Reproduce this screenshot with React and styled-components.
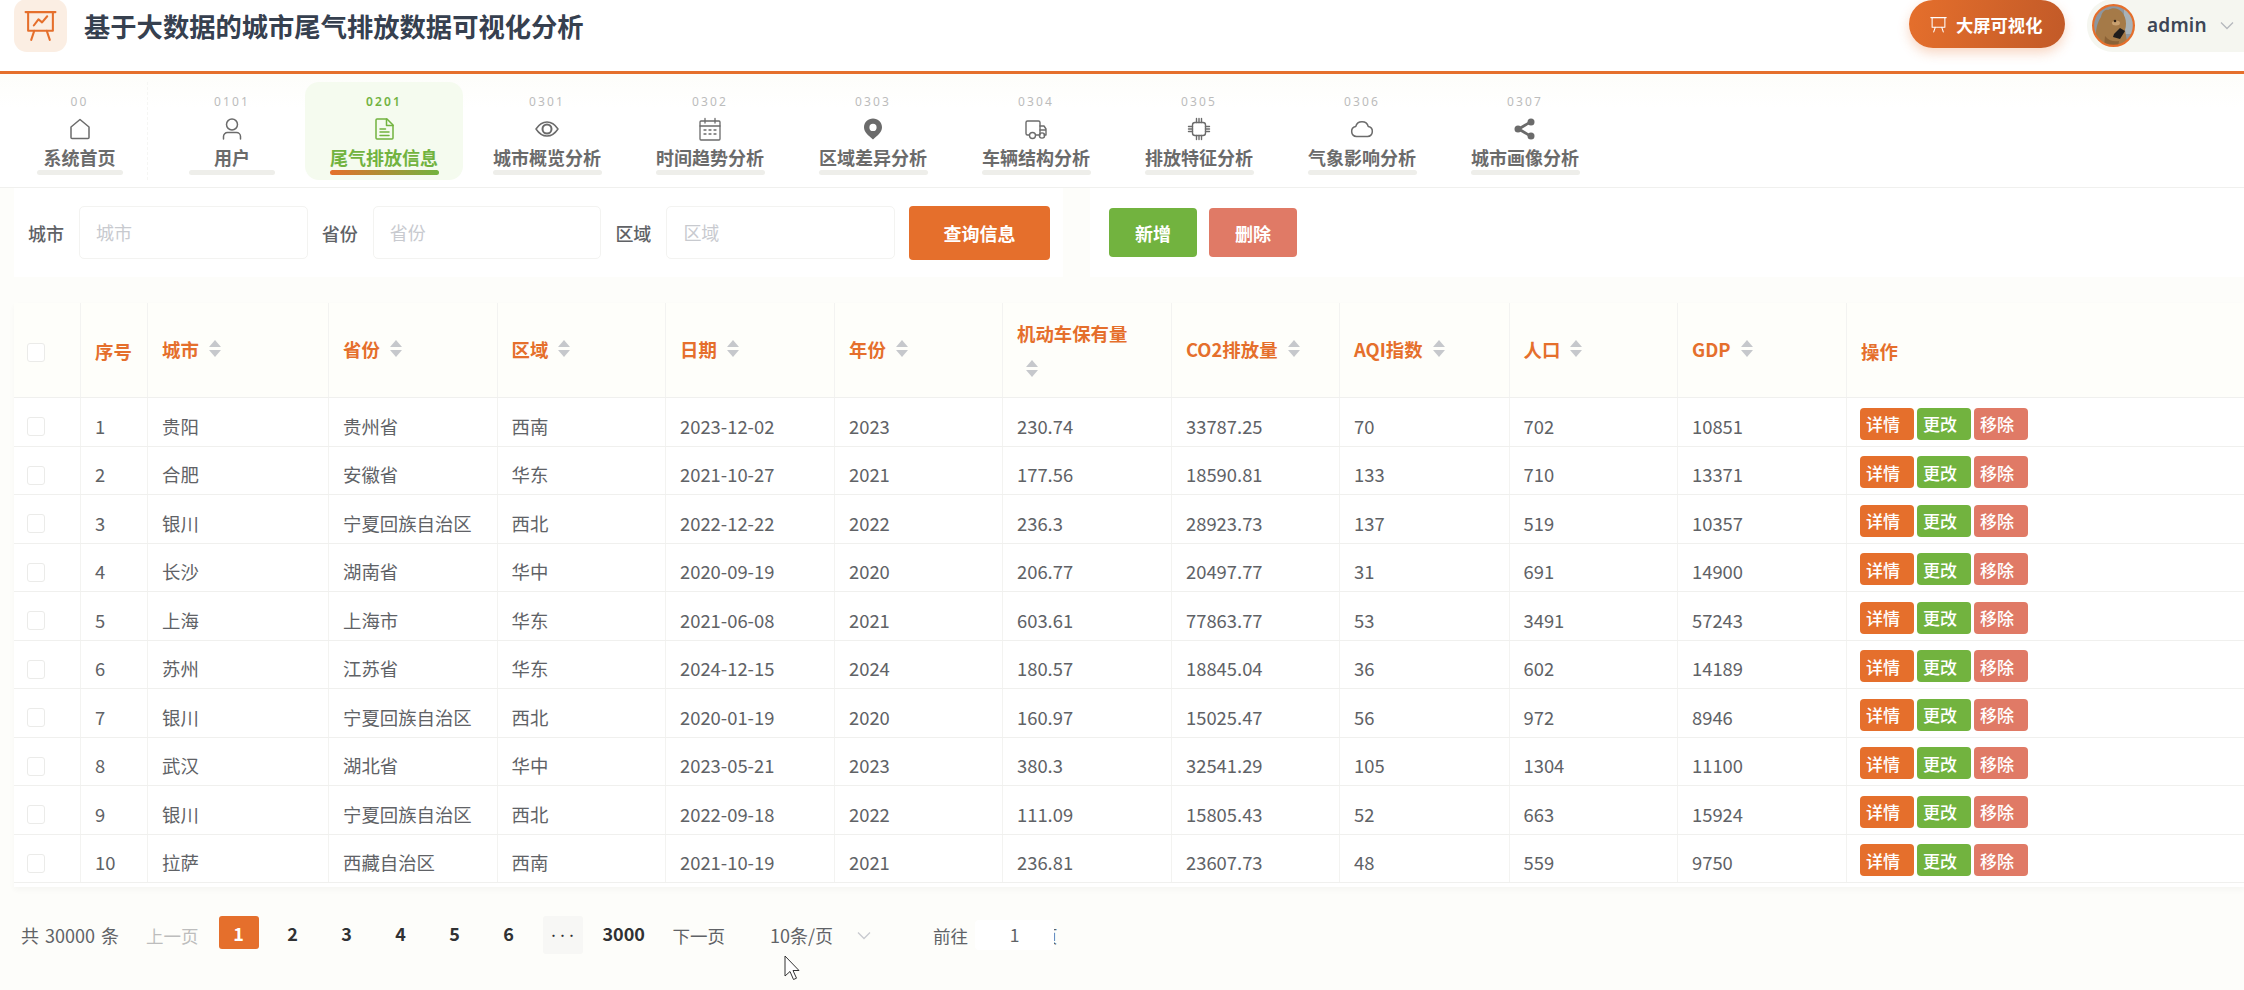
import styled, { createGlobalStyle } from "styled-components";

const ORANGE = "#e56f2c";
const GREEN = "#72b33f";
const RED = "#e07a66";
const COLUMNS = "67px 67px 181px 168.5px 168.5px 169px 168px 169px 168px 169.5px 168.5px 169px 1fr";

const GlobalStyle = createGlobalStyle`
	html, body {
		margin: 0;
		height: 100%;
		background: #fdfdfa;
	}
	body {
		font-family: "Noto Sans CJK SC", "Noto Sans", sans-serif;
		overflow: hidden;
	}
`;

const Page = styled.div`
	position: relative;
	width: 2244px;
	height: 990px;
	overflow: hidden;
`;

const Header = styled.header`
	display: flex;
	align-items: center;
	height: 74px;
	padding: 0 0 21px 14px;
	box-sizing: border-box;
	background: #fff;
	border-bottom: 3px solid ${ORANGE};
`;

const LogoBox = styled.div`
	display: flex;
	align-items: center;
	justify-content: center;
	flex: none;
	width: 53px;
	height: 53px;
	border-radius: 13px;
	background: #fbeee3;
	color: ${ORANGE};
`;

const Title = styled.h1`
	flex: 1;
	margin: 2px 0 0 17px;
	font-size: 26.3px;
	font-weight: 700;
	line-height: 36px;
	color: #36404f;
`;

const ScreenButton = styled.button`
	display: flex;
	align-items: center;
	gap: 9px;
	width: 156px;
	height: 48px;
	margin: -2px 22px 0 0;
	padding: 0 0 0 21px;
	border: 0;
	border-radius: 24px;
	background: linear-gradient(100deg, #e56f2c, #c25a28);
	box-shadow: 0 5px 12px rgba(229, 111, 44, 0.28);
	color: #fff;
	font: 700 17.3px "Noto Sans CJK SC", sans-serif;
`;

const UserChip = styled.div`
	display: flex;
	align-items: center;
	flex: none;
	width: 157px;
	height: 53px;
	padding-left: 5px;
	box-sizing: border-box;
	border-radius: 26px 0 0 26px;
	background: #f5f6f0;
`;

const UserName = styled.span`
	margin: 0 13px 0 12px;
	font: 600 19px "Noto Sans", sans-serif;
	letter-spacing: 0.2px;
	color: #3d4656;
`;

const Nav = styled.nav`
	display: flex;
	height: 114px;
	padding: 8px 0 7px 12px;
	box-sizing: border-box;
	background: linear-gradient(#fdfdfa, #fff 30%);
	border-bottom: 1px solid #f0f0ee;
`;

const NavItem = styled.div`
	display: flex;
	flex-direction: column;
	align-items: center;
	width: ${(p) => (p.$wide ? "158px" : "136px")};
	height: 98px;
	margin-right: ${(p) => (p.$first ? "16px" : "5px")};
	padding-top: 12px;
	box-sizing: border-box;
	border-radius: 14px;
	background: ${(p) => (p.$active ? "#f5fbef" : "transparent")};
	color: ${(p) => (p.$active ? GREEN : "#6b6b6b")};
	${(p) => p.$first && "border-right: 1px dashed #f6f6f4; border-radius: 0;"}
`;

const NavCode = styled.span`
	font: ${(p) => (p.$active ? 600 : 400)} 12px/16px "Noto Sans", sans-serif;
	letter-spacing: 2.1px;
	color: ${(p) => (p.$active ? GREEN : "#bcbcbc")};
`;

const NavIcon = styled.div`
	display: flex;
	height: 24px;
	margin: 7px 0 4px;
`;

const NavLabel = styled.span`
	font-size: 18px;
	font-weight: 600;
	line-height: 24px;
	white-space: nowrap;
`;

const NavBar = styled.span`
	display: block;
	width: ${(p) => (p.$wide ? "109px" : "86px")};
	height: 5px;
	margin-top: 1px;
	border-radius: 3px;
	background: ${(p) => (p.$active ? `linear-gradient(90deg, ${ORANGE}, ${GREEN})` : "#eeeeea")};
`;

const ToolRow = styled.section`
	display: flex;
	gap: 27px;
	height: 89px;
	padding-left: 14px;
`;

const SearchCard = styled.div`
	display: flex;
	align-items: center;
	gap: 14px;
	flex: none;
	width: 1049px;
	padding-left: 14px;
	box-sizing: border-box;
	background: #fff;
`;

const Field = styled.label`
	display: flex;
	align-items: center;
	gap: 15px;
	font-size: 18px;
	font-weight: 500;
	color: #606266;
`;

const FieldInput = styled.div`
	width: 228.7px;
	height: 53px;
	padding-left: 16px;
	box-sizing: border-box;
	border: 1px solid #f3f3f1;
	border-radius: 5px;
	background: #fff;
	font-size: 18px;
	font-weight: 400;
	line-height: 51px;
	color: #c8cacf;
`;

const ActionButton = styled.button`
	flex: none;
	width: ${(p) => p.$w}px;
	height: ${(p) => p.$h}px;
	padding: 0;
	border: 0;
	border-radius: 4px;
	background: ${(p) => p.$color};
	color: #fff;
	font: 600 18px "Noto Sans CJK SC", sans-serif;
`;

const ButtonCard = styled.div`
	display: flex;
	align-items: center;
	gap: 12px;
	flex: 1;
	padding-left: 19px;
	background: #fff;
`;

const TableCard = styled.section`
	margin: 26px 0 0 14px;
	background: #fff;
	box-shadow: 0 3px 6px rgba(0, 0, 0, 0.03);
	padding-bottom: 4px;
`;

const Row = styled.div`
	display: grid;
	grid-template-columns: ${COLUMNS};
	height: ${(p) => (p.$head ? "95px" : "48.5px")};
	box-sizing: border-box;
	background: ${(p) => (p.$head ? "#fefefa" : "#fff")};
	border-bottom: 1px solid #f0f0ee;
`;

const Cell = styled.div`
	display: flex;
	align-items: center;
	padding: 8px 0 0 14px;
	box-sizing: border-box;
	border-right: 1px solid #f3f3f1;
	font-size: 18.4px;
	color: #606266;
	white-space: nowrap;
	&:last-child {
		border-right: 0;
	}
`;

const HeadCell = styled.div`
	display: flex;
	flex-direction: ${(p) => (p.$stacked ? "column" : "row")};
	align-items: ${(p) => (p.$stacked ? "flex-start" : "center")};
	gap: ${(p) => (p.$stacked ? "14px" : "0")};
	padding: ${(p) => (p.$plain ? "2px" : "0")} 0 ${(p) => (p.$plain ? "0" : "3px")} 14px;
	box-sizing: border-box;
	border-right: 1px solid #f3f3f1;
	color: ${ORANGE};
	font-size: 18.4px;
	font-weight: 700;
	white-space: nowrap;
	${(p) => p.$stacked && "justify-content: center;"}
	&:last-child {
		border-right: 0;
	}
`;

const Caret = styled.span`
	display: flex;
	flex-direction: column;
	gap: 3px;
	margin-left: ${(p) => (p.$stacked ? "9px" : "10px")};
	&::before,
	&::after {
		content: "";
		border-left: 6px solid transparent;
		border-right: 6px solid transparent;
	}
	&::before {
		border-bottom: 7px solid #c6c8cc;
	}
	&::after {
		border-top: 7px solid #c6c8cc;
	}
`;

const Check = styled.span`
	display: block;
	width: 18px;
	height: 19px;
	margin: 2px 0 0 -1px;
	box-sizing: border-box;
	border: 1px solid #ebebe9;
	border-radius: 3px;
	background: #fff;
`;

const ActionCell = styled(Cell)`
	gap: 3px;
	padding: 4px 0 0 13px;
`;

const SmallButton = styled.button`
	width: 54px;
	height: 32px;
	padding: 0 0 0 6px;
	border: 0;
	border-radius: 4px;
	background: ${(p) => p.$color};
	color: #fff;
	font: 500 17px "Noto Sans CJK SC", sans-serif;
	text-align: left;
`;

const Pager = styled.footer`
	display: flex;
	align-items: center;
	height: 38px;
	margin-top: 29px;
	padding-left: 21px;
	font-size: 17.5px;
	color: #606266;
`;

const Total = styled.span`
	width: 125px;
	font-size: 18px;
	word-spacing: 2px;
	white-space: nowrap;
`;

const PageText = styled.span`
	flex: none;
	color: ${(p) => (p.$muted ? "#bdbdbd" : "#606266")};
`;

const PageList = styled.div`
	display: flex;
	align-items: center;
	gap: 14px;
	margin: 0 20px;
`;

const PageButton = styled.span`
	display: flex;
	align-items: center;
	justify-content: center;
	width: 40px;
	height: ${(p) => (p.$more ? "38px" : "33px")};
	margin-top: ${(p) => (p.$more ? "0" : "-5px")};
	border-radius: 3px;
	background: ${(p) => (p.$active ? ORANGE : p.$more ? "#f7f7f5" : "transparent")};
	color: ${(p) => (p.$active ? "#fff" : "#303133")};
	font-weight: 700;
	font-size: ${(p) => (p.$more ? "9px" : "18px")};
	letter-spacing: 0;
`;

const LastPage = styled.span`
	margin: -5px 27.5px 0 0;
	font-size: 18px;
	font-weight: 700;
	color: #303133;
`;

const SizeSelect = styled.div`
	display: flex;
	align-items: center;
	gap: 24px;
	width: 163px;
	margin-left: 45px;
	font-size: 18px;
`;

const JumpBox = styled.div`
	position: relative;
	z-index: 1;
	width: 79px;
	height: 30px;
	margin: 0 -14px 0 7px;
	border-radius: 4px;
	background: #fff;
	text-align: center;
	line-height: 30px;
`;

const Cursor = styled.svg`
	position: absolute;
	left: 784px;
	top: 955px;
`;

const stroke = { fill: "none", stroke: "currentColor", strokeWidth: 1.5, strokeLinecap: "round", strokeLinejoin: "round" };

const NAV_ICONS = {
	home: <path {...stroke} d="M12 2.5 21 10v10.5a1 1 0 0 1-1 1H4a1 1 0 0 1-1-1V10Z" />,
	user: (
		<g {...stroke}>
			<circle cx="12" cy="7.5" r="5.5" />
			<path d="M3.5 22v-2.5a4 4 0 0 1 4-4h9a4 4 0 0 1 4 4V22" />
		</g>
	),
	doc: (
		<g {...stroke}>
			<path d="M4 3a1 1 0 0 1 1-1h10l6 6v13a1 1 0 0 1-1 1H5a1 1 0 0 1-1-1Z" />
			<path d="M14.5 2v6.5H21M8 12h5.5M8 15h9M8 18.5h9" />
		</g>
	),
	eye: (
		<g {...stroke}>
			<path d="M1 12c3-4.500 6.500-7 11-7s8 2.500 11 7c-3 4.500-6.500 7-11 7s-8-2.500-11-7Z" />
			<circle cx="12" cy="12" r="4.500" strokeWidth="2" />
		</g>
	),
	calendar: (
		<g {...stroke} strokeWidth="1.3">
			<rect x="2" y="4" width="20" height="19" rx="1" />
			<path d="M2 9h20M7 1.500V6M17 1.500V6M6 13h2M11 13h2M16 13h2M6 17h2M11 17h2M16 17h2" />
		</g>
	),
	pin: (
		<path
			fill="currentColor"
			fillRule="evenodd"
			d="M12 1.500c5 0 9 3.800 9 8.700 0 4.800-4.500 8.300-9 12.300-4.500-4-9-7.500-9-12.300 0-4.900 4-8.700 9-8.700Zm0 5.300a3.600 3.600 0 1 0 0 7.200 3.600 3.600 0 0 0 0-7.200Z"
		/>
	),
	truck: (
		<g {...stroke} strokeWidth="1.4">
			<path d="M5 18H3.500A1.500 1.500 0 0 1 2 16.500V5.500A1.500 1.500 0 0 1 3.500 4h11a1.500 1.500 0 0 1 1.500 1.500V18h-4" />
			<path d="M16 9h4l2 3v6h-2M16 13h6" />
			<circle cx="8.500" cy="18.500" r="3" />
			<circle cx="18" cy="18.500" r="2.600" />
		</g>
	),
	cpu: (
		<g {...stroke} strokeWidth="1.4">
			<rect x="5.500" y="5.500" width="13" height="13" rx="2.500" />
			<path d="M9.500 1.500v4M12 1.500v4M14.500 1.500v4M9.500 18.500v4M12 18.500v4M14.500 18.500v4M1.500 9.500h4M1.500 12h4M1.500 14.500h4M18.500 9.500h4M18.500 12h4M18.500 14.500h4" />
		</g>
	),
	cloud: <path {...stroke} d="M6.500 19.500a5 5 0 0 1-.8-9.900 6.500 6.500 0 0 1 12.600 0 5 5 0 0 1-.8 9.900Z" />,
	share: (
		<g fill="currentColor">
			<circle cx="18" cy="5" r="3.500" />
			<circle cx="18" cy="19" r="3.500" />
			<circle cx="5" cy="12" r="3.500" />
			<path d="M17 3.700 18.200 6 6.500 13.300 5 10.800ZM6.500 10.700 18.200 18l-1.200 2.300L5 13.200Z" />
		</g>
	),
};

const NAV = [
	{ code: "00", icon: "home", label: "系统首页", first: true },
	{ code: "0101", icon: "user", label: "用户" },
	{ code: "0201", icon: "doc", label: "尾气排放信息", wide: true, active: true },
	{ code: "0301", icon: "eye", label: "城市概览分析", wide: true },
	{ code: "0302", icon: "calendar", label: "时间趋势分析", wide: true },
	{ code: "0303", icon: "pin", label: "区域差异分析", wide: true },
	{ code: "0304", icon: "truck", label: "车辆结构分析", wide: true },
	{ code: "0305", icon: "cpu", label: "排放特征分析", wide: true },
	{ code: "0306", icon: "cloud", label: "气象影响分析", wide: true },
	{ code: "0307", icon: "share", label: "城市画像分析", wide: true },
];

const HEADS = ["城市", "省份", "区域", "日期", "年份", "机动车保有量", "CO2排放量", "AQI指数", "人口", "GDP"];

const ROWS = [
	["贵阳", "贵州省", "西南", "2023-12-02", "2023", "230.74", "33787.25", "70", "702", "10851"],
	["合肥", "安徽省", "华东", "2021-10-27", "2021", "177.56", "18590.81", "133", "710", "13371"],
	["银川", "宁夏回族自治区", "西北", "2022-12-22", "2022", "236.3", "28923.73", "137", "519", "10357"],
	["长沙", "湖南省", "华中", "2020-09-19", "2020", "206.77", "20497.77", "31", "691", "14900"],
	["上海", "上海市", "华东", "2021-06-08", "2021", "603.61", "77863.77", "53", "3491", "57243"],
	["苏州", "江苏省", "华东", "2024-12-15", "2024", "180.57", "18845.04", "36", "602", "14189"],
	["银川", "宁夏回族自治区", "西北", "2020-01-19", "2020", "160.97", "15025.47", "56", "972", "8946"],
	["武汉", "湖北省", "华中", "2023-05-21", "2023", "380.3", "32541.29", "105", "1304", "11100"],
	["银川", "宁夏回族自治区", "西北", "2022-09-18", "2022", "111.09", "15805.43", "52", "663", "15924"],
	["拉萨", "西藏自治区", "西南", "2021-10-19", "2021", "236.81", "23607.73", "48", "559", "9750"],
];

function BoardIcon({ size, chart }) {
	return (
		<svg width={size} height={size} viewBox="0 0 32 32" {...stroke} strokeWidth="2">
			<path d="M1.500 3h29M4 3v18h24V3M10 21l-3 9M22 21l3 9" />
			{chart && <path d="M9.500 16l4.500-6 3.500 3 5-6" />}
		</svg>
	);
}

function Avatar() {
	return (
		<svg width="43" height="43" viewBox="0 0 43 43">
			<defs>
				<clipPath id="avatar-clip">
					<circle cx="21.500" cy="21.500" r="20" />
				</clipPath>
			</defs>
			<g clipPath="url(#avatar-clip)">
				<rect width="43" height="43" fill="#8d97a0" />
				<rect x="32" width="11" height="30" fill="#a8b2b8" />
				<path d="M5 43c-3-14 0-24 4-30 1-5 4-8 7-7 5-3 10-2 14 2 4 5 5 12 3 18l3 17Z" fill="#a57a48" />
				<ellipse cx="24" cy="19" rx="4" ry="2.500" fill="#c9a06f" />
				<circle cx="23" cy="17" r="1.300" fill="#2e2016" />
				<path d="M22 30l6-6 5 3-5 8-7-2Z" fill="#1e1c1c" />
				<path d="M13 32c4 5 9 6 14 5l-1 6H12Z" fill="#8b6236" />
			</g>
			<circle cx="21.500" cy="21.500" r="20.400" fill="none" stroke={ORANGE} strokeWidth="2.200" />
		</svg>
	);
}

function Chevron({ color }) {
	return (
		<svg width="14" height="9" viewBox="0 0 14 9" fill="none" stroke={color} strokeWidth="1.300">
			<path d="M1 1.500 7 7.500 13 1.500" />
		</svg>
	);
}

export default function App() {
	return (
		<Page>
			<GlobalStyle />
			<Header>
				<LogoBox>
					<BoardIcon size={33} chart />
				</LogoBox>
				<Title>基于大数据的城市尾气排放数据可视化分析</Title>
				<ScreenButton>
					<BoardIcon size={17} />
					大屏可视化
				</ScreenButton>
				<UserChip>
					<Avatar />
					<UserName>admin</UserName>
					<Chevron color="#b5b8bd" />
				</UserChip>
			</Header>

			<Nav>
				{NAV.map((item) => (
					<NavItem key={item.code} $wide={item.wide} $active={item.active} $first={item.first}>
						<NavCode $active={item.active}>{item.code}</NavCode>
						<NavIcon>
							<svg width="24" height="24" viewBox="0 0 24 24">
								{NAV_ICONS[item.icon]}
							</svg>
						</NavIcon>
						<NavLabel>{item.label}</NavLabel>
						<NavBar $wide={item.wide} $active={item.active} />
					</NavItem>
				))}
			</Nav>

			<ToolRow>
				<SearchCard>
					{["城市", "省份", "区域"].map((name) => (
						<Field key={name}>
							{name}
							<FieldInput>{name}</FieldInput>
						</Field>
					))}
					<ActionButton $w={141} $h={54} $color={ORANGE}>
						查询信息
					</ActionButton>
				</SearchCard>
				<ButtonCard>
					<ActionButton $w={88} $h={49} $color={GREEN}>
						新增
					</ActionButton>
					<ActionButton $w={88} $h={49} $color={RED}>
						删除
					</ActionButton>
				</ButtonCard>
			</ToolRow>

			<TableCard>
				<Row $head>
					<HeadCell $plain>
						<Check />
					</HeadCell>
					<HeadCell $plain>序号</HeadCell>
					{HEADS.map((head) => {
						const stacked = head === "机动车保有量";
						return (
							<HeadCell key={head} $stacked={stacked}>
								{head}
								<Caret $stacked={stacked} />
							</HeadCell>
						);
					})}
					<HeadCell $plain>操作</HeadCell>
				</Row>
				{ROWS.map((row, index) => (
					<Row key={index}>
						<Cell>
							<Check />
						</Cell>
						<Cell>{index + 1}</Cell>
						{row.map((value, col) => (
							<Cell key={col}>{value}</Cell>
						))}
						<ActionCell>
							<SmallButton $color={ORANGE}>详情</SmallButton>
							<SmallButton $color={GREEN}>更改</SmallButton>
							<SmallButton $color={RED}>移除</SmallButton>
						</ActionCell>
					</Row>
				))}
			</TableCard>

			<Pager>
				<Total>共 30000 条</Total>
				<PageText $muted>上一页</PageText>
				<PageList>
					<PageButton $active>1</PageButton>
					{[2, 3, 4, 5, 6].map((n) => (
						<PageButton key={n}>{n}</PageButton>
					))}
					<PageButton $more>•••</PageButton>
				</PageList>
				<LastPage>3000</LastPage>
				<PageText>下一页</PageText>
				<SizeSelect>
					10条/页
					<Chevron color="#c8cacf" />
				</SizeSelect>
				<PageText>前往</PageText>
				<JumpBox>1</JumpBox>
				<PageText>页</PageText>
			</Pager>

			<Cursor width="16" height="26" viewBox="0 0 16 26">
				<path d="M1 1v20l5-4.500 3.500 8 3-1.300-3.500-7.700H15Z" fill="#fff" stroke="#333" strokeWidth="1" />
			</Cursor>
		</Page>
	);
}
